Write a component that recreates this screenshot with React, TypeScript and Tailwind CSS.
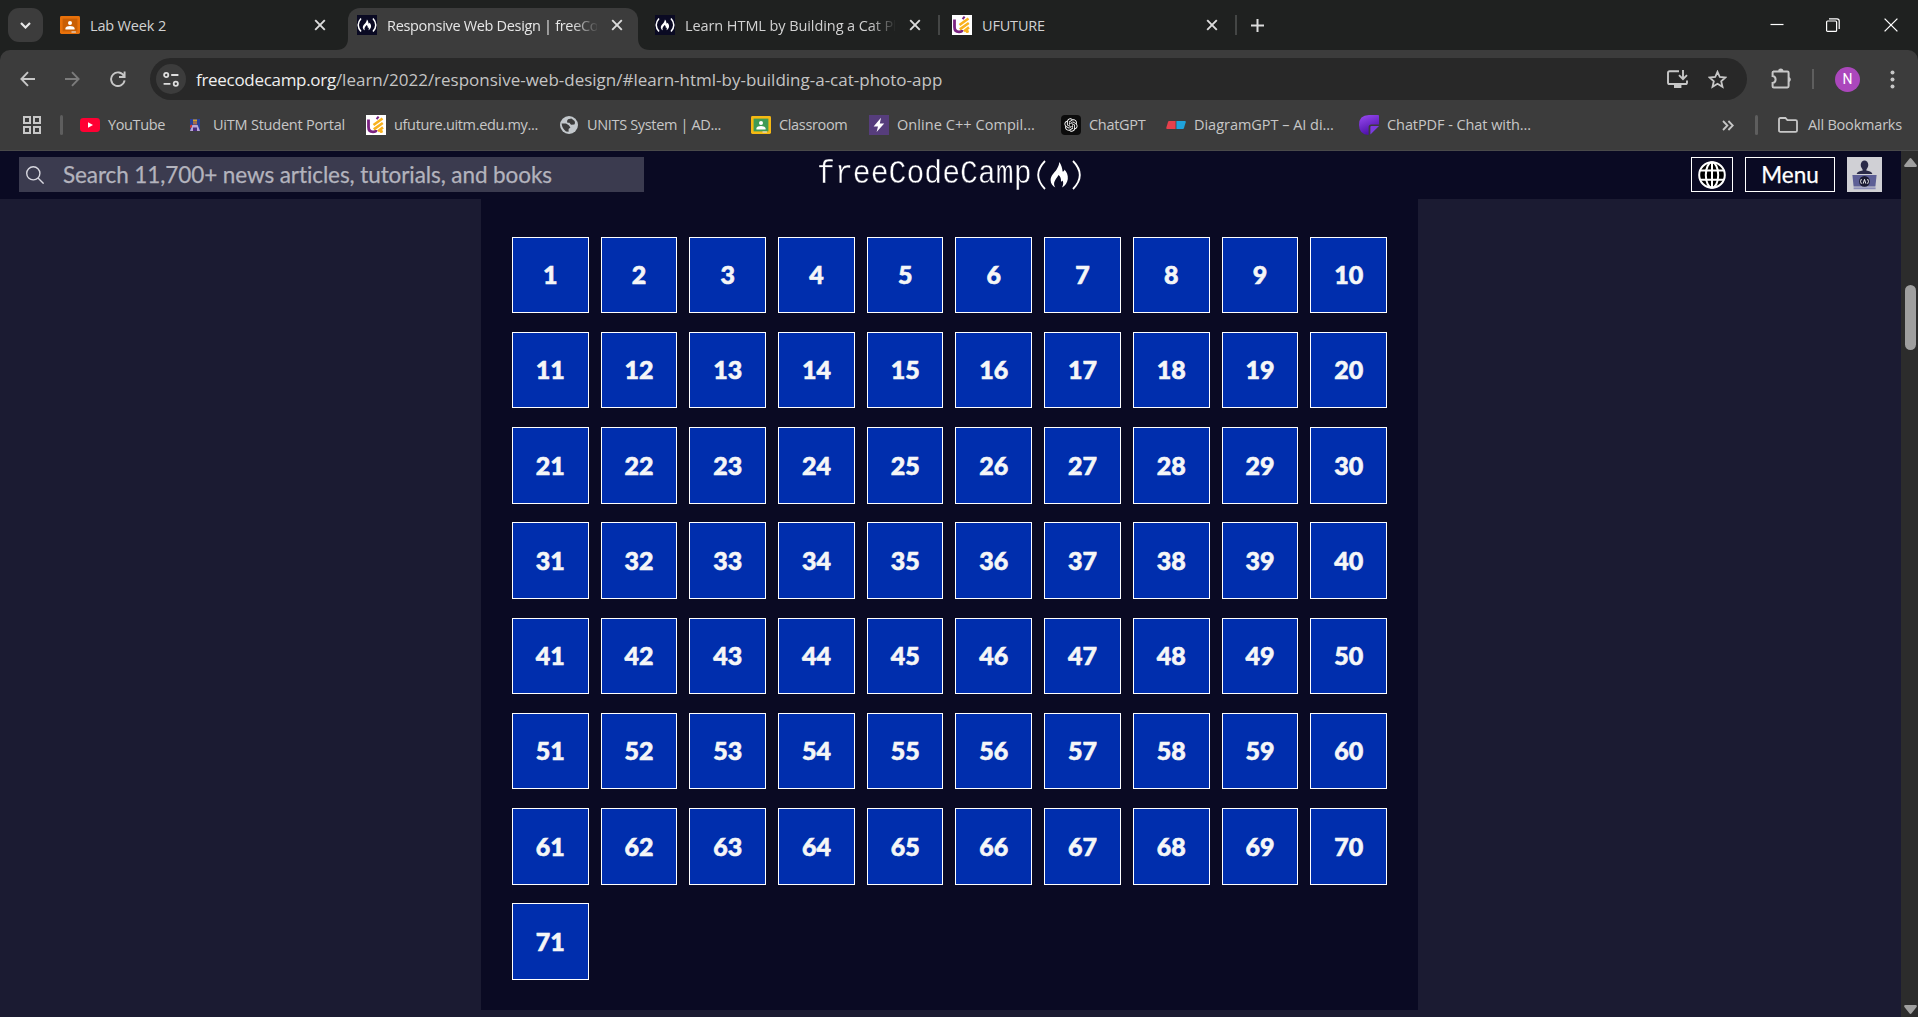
import React from "react";
import { RiOpenaiFill } from "react-icons/ri";

const FLAME =
  "M9 0C11 2.5 12.2 6 12.4 9.5C13.4 9.8 14.2 9 14.2 7.6C16.6 10 18 13.4 17.6 17C17.2 20.6 15 23.6 11.8 25.6C13.2 23 13.4 20.6 12.4 18.6C11.9 19.4 11.4 19.6 10.8 19.4C11 16.6 10.2 14.6 8.4 13C6.8 15.6 4.6 18 4 20.6C3.6 22.6 4.2 24.4 5.2 25.6C2.4 24.2 0.4 21.4 0.4 18C0.4 13.6 4.4 10.4 6.4 7.4C8 5 9 2.6 9 0Z";

function CampIcon() {
  return (
    <svg className="h-5 w-5 shrink-0" viewBox="0 0 20 20">
      <rect width="20" height="20" fill="#0a0a23" />
      <path d="M4 3.6Q-1.6 10 4 16.6M16 3.6Q21.6 10 16 16.6" fill="none" stroke="#fff" strokeWidth="1.5" />
      <path d={FLAME} fill="#fff" transform="translate(5.6 4.6) scale(0.48 0.42)" />
    </svg>
  );
}

function UfutureIcon() {
  return (
    <svg className="h-5 w-5 shrink-0" viewBox="0 0 20 20">
      <rect width="20" height="20" fill="#fff" />
      <path d="M2.5 4.5V12Q2.5 16.8 7 16.8Q10 16.8 10.4 15" fill="none" stroke="#7b2382" strokeWidth="2.8" />
      <path d="M10.6 4.2L12.6 1.6" stroke="#7b2382" strokeWidth="2" />
      <path d="M7.5 10L16.5 3.5M7.8 14.4L16.8 8M12 16.2L17 12.4" stroke="#f9b21d" strokeWidth="2.6" />
      <circle cx="15.2" cy="16.4" r="1.7" fill="#f9b21d" />
    </svg>
  );
}

function ClassIcon({ border, board }: { border: string; board: string }) {
  return (
    <svg className="h-5 w-5 shrink-0" viewBox="0 0 20 20">
      <rect y="1" width="20" height="18" rx="1.4" fill={border} />
      <rect x="2.6" y="3.6" width="14.8" height="12.8" fill={board} />
      <circle cx="10" cy="7.9" r="2" fill="#fff" />
      <path d="M5.4 14.6V13Q6.2 11.2 10 11Q13.8 11.2 14.6 13V14.6Z" fill="#fff" />
      <rect x="11.5" y="16.4" width="4.4" height="1.2" fill="#ddd" />
    </svg>
  );
}

function Cross() {
  return (
    <svg className="h-3 w-3 shrink-0" viewBox="0 0 12 12" stroke="#dcdcdc" strokeWidth="1.9">
      <path d="M1.2 1.2L10.8 10.8M10.8 1.2L1.2 10.8" />
    </svg>
  );
}

function TabStrip() {
  return (
    <div className="flex h-[50px] bg-[#1f2120] text-[14.5px] text-[#d2d2d2]">
      <div className="ml-2 mt-2 flex h-[34px] w-[35px] shrink-0 items-center justify-center rounded-[11px] bg-[#3c3c3c]">
        <svg className="h-[7px] w-[11px]" viewBox="0 0 11 7" fill="none" stroke="#e8e8e8" strokeWidth="2.2">
          <path d="M1 1L5.5 5.5L10 1" />
        </svg>
      </div>
      <div className="flex h-[50px] w-[305px] shrink-0 items-center pl-[17px]">
        <ClassIcon border="#e8710a" board="#c95f05" />
        <span className="ml-[10px] w-[224px] whitespace-nowrap pt-px tracking-[-0.16px]">Lab Week 2</span>
        <Cross />
      </div>
      <div className="relative mt-2 flex h-[42px] w-[290px] shrink-0 items-center rounded-t-[12px] bg-[#3c3c3c] pb-2 pl-[9px] text-[#e6e6e6]">
        <svg className="absolute -left-3 bottom-0 h-3 w-3" viewBox="0 0 12 12" fill="#3c3c3c">
          <path d="M12 0V12H0Q12 12 12 0Z" />
        </svg>
        <svg className="absolute -right-3 bottom-0 h-3 w-3" viewBox="0 0 12 12" fill="#3c3c3c">
          <path d="M0 0V12H12Q0 12 0 0Z" />
        </svg>
        <CampIcon />
        <span className="ml-[10px] w-[210px] shrink-0 overflow-hidden whitespace-nowrap pt-px tracking-[-0.32px] [mask-image:linear-gradient(to_right,black_185px,transparent_212px)]">
          Responsive Web Design | freeCodeCamp
        </span>
        <span className="ml-[14px] flex">
          <Cross />
        </span>
      </div>
      <div className="flex h-[50px] w-[334px] shrink-0 items-center pl-[17px]">
        <CampIcon />
        <span className="ml-[10px] w-[210px] shrink-0 overflow-hidden whitespace-nowrap pt-px tracking-[-0.08px] [mask-image:linear-gradient(to_right,black_185px,transparent_212px)]">
          Learn HTML by Building a Cat Photo App
        </span>
        <span className="ml-[14px] flex">
          <Cross />
        </span>
        <span className="ml-[17px] h-5 w-[2px] bg-[#444645]" />
        <span className="ml-3 flex">
          <UfutureIcon />
        </span>
      </div>
      <div className="flex h-[50px] grow items-center pl-[10px]">
        <span className="w-[224px] whitespace-nowrap pt-px tracking-[-0.17px]">UFUTURE</span>
        <Cross />
        <span className="ml-[17px] h-5 w-[2px] bg-[#444645]" />
        <svg className="ml-[14px] h-[13px] w-[13px]" viewBox="0 0 13 13" stroke="#dcdcdc" strokeWidth="2">
          <path d="M6.5 0V13M0 6.5H13" />
        </svg>
      </div>
      <div className="mr-5 flex h-[49px] items-center text-white">
        <svg className="h-[14px] w-[14px]" viewBox="0 0 14 14" stroke="currentColor" strokeWidth="1.2">
          <path d="M0.5 6.5H13.5" />
        </svg>
        <svg className="ml-[42px] h-[14px] w-[14px]" viewBox="0 0 14 14" fill="none" stroke="currentColor" strokeWidth="1.2">
          <rect x="0.6" y="3" width="10" height="10.4" rx="1" />
          <path d="M3 0.8H11Q13.2 0.8 13.2 3V11" />
        </svg>
        <svg className="ml-11 h-[14px] w-[14px]" viewBox="0 0 14 14" stroke="currentColor" strokeWidth="1.3">
          <path d="M0.6 0.6L13.4 13.4M13.4 0.6L0.6 13.4" />
        </svg>
      </div>
    </div>
  );
}

function AddressRow() {
  return (
    <div className="flex h-[58px] items-center rounded-t-[10px] bg-[#3c3c3c] pl-5 text-[#c7c7c7]">
      <svg className="h-4 w-[15px]" viewBox="0 0 15 16" fill="none" stroke="currentColor" strokeWidth="1.9">
        <path d="M15 8H1.6M8 1.2L1.4 8L8 14.8" />
      </svg>
      <svg className="ml-[30px] h-4 w-[15px]" viewBox="0 0 15 16" fill="none" stroke="#7b7b7b" strokeWidth="1.9">
        <path d="M0 8H13.4M7 1.2L13.6 8L7 14.8" />
      </svg>
      <svg className="ml-[30px] h-4 w-4" viewBox="0 0 16 16" fill="none" stroke="currentColor" strokeWidth="1.9">
        <path d="M14 5.2A6.8 6.8 0 1 0 14.6 9.4M14.6 0.6V6H9" />
      </svg>
      <div className="ml-6 flex h-[42px] w-[1597px] shrink-0 items-center rounded-full bg-[#282828] pl-[6px]">
        <span className="flex h-[30px] w-[30px] items-center justify-center rounded-full bg-[#3c3c3c]">
          <svg className="h-[15px] w-4" viewBox="0 0 16 15" fill="none" stroke="#dedede" strokeWidth="1.8">
            <circle cx="3.2" cy="3" r="2.1" />
            <path d="M8.2 3H15.4M0.6 11.8H7.4" />
            <circle cx="12.8" cy="11.8" r="2.1" />
          </svg>
        </span>
        <span className="ml-[10px] whitespace-nowrap pt-[2px] text-[17px] text-[#c4c4c4]">
          <span className="tracking-[-0.3px] text-[#efefef]">freecodecamp.org</span>
          /learn/2022/responsive-web-design/#learn-html-by-building-a-cat-photo-app
        </span>
        <svg className="ml-auto h-[19px] w-[21px]" viewBox="0 0 21 19" fill="none" stroke="currentColor" strokeWidth="1.9">
          <path d="M12 1.2H2.6Q1 1.2 1 2.8V12.4Q1 14 2.6 14H18.4Q20 14 20 12.4V10.6M16 0V8.6M12 5.2L16 9.2L20 5.2" />
          <rect x="7" y="15" width="7.4" height="3" fill="currentColor" stroke="none" />
        </svg>
        <svg className="ml-5 mr-5 h-[19px] w-[19px]" viewBox="0 0 19 19" fill="none" stroke="currentColor" strokeWidth="1.8">
          <path d="M9.5 1.8L11.8 7L17.4 7.5L13.2 11.2L14.5 16.8L9.5 13.8L4.5 16.8L5.8 11.2L1.6 7.5L7.2 7Z" />
        </svg>
      </div>
      <svg className="-mt-[1px] ml-6 h-[21px] w-[22px]" viewBox="0 0 22 21" fill="none" stroke="currentColor" strokeWidth="2">
        <path d="M2 3.6H16.4Q17.6 3.6 17.6 4.8V18Q17.6 19.4 16.4 19.4H2.8Q1.6 19.4 1.6 18.2V15Q4.6 14.6 4.6 11.6Q4.6 8.4 1.6 8V4.6Q1.6 3.6 2.8 3.6" />
        <path d="M7.2 3A2.6 2.6 0 0 1 12.4 3ZM18 9A2.6 2.6 0 0 1 18 14Z" fill="currentColor" stroke="none" />
      </svg>
      <span className="ml-[19px] h-5 w-[2px] bg-[#5e5e5e]" />
      <span className="ml-[21px] flex h-[25px] w-[25px] items-center justify-center rounded-full bg-[#ab47bc] font-['Roboto'] text-[14px] text-white">
        N
      </span>
      <svg className="ml-[30px] h-[19px] w-[5px]" viewBox="0 0 5 19" fill="currentColor">
        <circle cx="2.5" cy="2.4" r="2" />
        <circle cx="2.5" cy="9.5" r="2" />
        <circle cx="2.5" cy="16.6" r="2" />
      </svg>
    </div>
  );
}

function StudentIcon() {
  return (
    <svg className="mx-[5px] h-3 w-[10px]" viewBox="0 0 10 12">
      <rect width="10" height="12" fill="#2a3f96" />
      <rect x="3" y="0.5" width="4" height="2" fill="#d9a520" />
      <rect x="3" y="2.5" width="4" height="3" fill="#a86a4c" />
      <path d="M0 12L2.4 6H7.6L10 12Z" fill="#b9a5d6" />
      <path d="M3 8.5H7V12H3Z" fill="#4b2b7d" />
      <path d="M0 6.5L2 5.5V8L0 9Z" fill="#d0342c" />
    </svg>
  );
}

const bookmarks = [
  {
    label: "YouTube",
    text: "tracking-[-0.37px]",
    box: "w-[105px]",
    icon: (
      <svg className="h-5 w-5" viewBox="0 0 20 20">
        <rect y="3" width="20" height="14" rx="3.4" fill="#ff0033" />
        <path d="M8 7.2L13 10L8 12.8Z" fill="#fff" />
      </svg>
    ),
  },
  { label: "UiTM Student Portal", text: "tracking-[-0.22px]", box: "w-[181px]", icon: <StudentIcon /> },
  { label: "ufuture.uitm.edu.my...", text: "tracking-[-0.34px]", box: "w-[193px]", icon: <UfutureIcon /> },
  {
    label: "UNITS System | AD...",
    text: "tracking-[-0.34px]",
    box: "w-[192px]",
    icon: (
      <svg className="h-5 w-5" viewBox="0 0 20 20">
        <circle cx="10" cy="10" r="9" fill="#c3c8cc" />
        <path
          d="M9 4.2L12.4 3.4L15.6 6Q16.6 8.4 15.4 9.4L12 9.8L10.4 7.8H8.4L8 6ZM2.6 8.6H7L9.8 10.2L11.4 12.6L9.6 14V16.8L7 16.4Q3 13.6 2.6 8.6Z"
          fill="#3c3c3c"
        />
      </svg>
    ),
  },
  {
    label: "Classroom",
    text: "tracking-[-0.34px]",
    box: "w-[118px]",
    icon: <ClassIcon border="#f5b912" board="#3f9b55" />,
  },
  {
    label: "Online C++ Compil...",
    text: "tracking-[0.06px]",
    box: "w-[192px]",
    icon: (
      <svg className="h-5 w-5" viewBox="0 0 20 20">
        <rect width="20" height="20" fill="#563d7c" />
        <path d="M12 2.8L4.6 11.4H9L7.6 17L15.2 8.4H10.8Z" fill="#fff" />
      </svg>
    ),
  },
  {
    label: "ChatGPT",
    text: "tracking-[-0.3px]",
    box: "w-[105px]",
    icon: (
      <span className="flex h-5 w-5 items-center justify-center rounded-[4px] bg-[#0c0c0c] text-[16px] text-white">
        <RiOpenaiFill />
      </span>
    ),
  },
  {
    label: "DiagramGPT – AI di...",
    text: "tracking-[-0.03px]",
    box: "w-[193px]",
    icon: (
      <svg className="h-5 w-5" viewBox="0 0 20 20">
        <path d="M3 6H9.6V14H1.2Q0 14 0.3 12.8L2 7Q2.3 6 3 6Z" fill="#e5404c" />
        <path d="M10.4 6H19Q20 6 19.7 7.2L18 13Q17.7 14 17 14H10.4Z" fill="#1fa3dc" />
      </svg>
    ),
  },
  {
    label: "ChatPDF - Chat with...",
    text: "tracking-[-0.07px]",
    box: "w-[180px]",
    icon: (
      <svg className="h-5 w-5" viewBox="0 0 20 20">
        <defs>
          <linearGradient id="pdf" x1="0" y1="0" x2="0.4" y2="1">
            <stop offset="0" stopColor="#9a4bf2" />
            <stop offset="1" stopColor="#4c10a8" />
          </linearGradient>
        </defs>
        <path d="M10 0H19Q20 0 20 1V9.4H12.2Q9.6 9.4 9.6 12V20Q0 19.4 0 10Q0 0 10 0Z" fill="url(#pdf)" />
        <path d="M11.4 12Q11.4 11 12.4 11H20L11.4 19.6Z" fill="#7c3be0" />
      </svg>
    ),
  },
];

function BookmarksBar() {
  return (
    <div className="flex h-[43px] items-start border-b border-[#4a4a4a] bg-[#3c3c3c] pl-[23px] text-[14.5px] text-[#c7c7c7]">
      <div className="flex h-[34px] w-full items-center">
        <svg className="h-[18px] w-[18px] shrink-0" viewBox="0 0 18 18" fill="none" stroke="currentColor" strokeWidth="2">
          <path d="M1 1H7V7H1ZM11 1H17V7H11ZM1 11H7V17H1ZM11 11H17V17H11Z" />
        </svg>
        <span className="ml-[19px] mr-[17px] h-5 w-[3px] shrink-0 rounded-sm bg-[#5e5e5e]" />
        {bookmarks.map((b) => (
          <div key={b.label} className={"flex shrink-0 items-center " + b.box}>
            <span className="mr-2 flex w-5 shrink-0">{b.icon}</span>
            <span className={"whitespace-nowrap " + b.text}>{b.label}</span>
          </div>
        ))}
        <div className="ml-auto flex items-center pr-[16px]">
          <svg className="h-[11px] w-3" viewBox="0 0 12 11" fill="none" stroke="currentColor" strokeWidth="1.8">
            <path d="M1 1L5.4 5.5L1 10M6.4 1L10.8 5.5L6.4 10" />
          </svg>
          <span className="ml-[21px] h-5 w-[3px] rounded-sm bg-[#5e5e5e]" />
          <svg className="ml-[20px] h-4 w-5" viewBox="0 0 20 16" fill="none" stroke="currentColor" strokeWidth="1.8">
            <path d="M1 2.4Q1 1 2.4 1H7.4L9.4 3.2H17.6Q19 3.2 19 4.6V13.4Q19 14.8 17.6 14.8H2.4Q1 14.8 1 13.4Z" />
          </svg>
          <span className="ml-[10px] whitespace-nowrap tracking-[-0.2px]">All Bookmarks</span>
        </div>
      </div>
    </div>
  );
}

function SiteNav() {
  return (
    <div className="flex h-12 shrink-0 items-start bg-[#0a0a23] pl-[19px] pt-[6px] font-['Lato'] text-[22.5px]">
      <div className="flex h-[35px] w-[625px] items-center bg-[#3b3b4f] pl-[7px] text-[#b3b3bd]">
        <svg className="h-[18px] w-[18px]" viewBox="0 0 18 18" fill="none" stroke="#d8d8e0" strokeWidth="1.4">
          <circle cx="7.3" cy="7.3" r="6.6" />
          <path d="M12 12L17.6 17.6" />
        </svg>
        <span className="ml-[19px] whitespace-nowrap tracking-[-0.09px] [-webkit-text-stroke:0.25px_#b3b3bd]">
          Search 11,700+ news articles, tutorials, and books
        </span>
      </div>
      <div className="ml-[173px] flex h-[35px] w-[266px] items-center text-white">
        <span className="block w-[217px] origin-center scale-y-[1.13] whitespace-nowrap font-['Liberation_Mono'] text-[29.8px] leading-[35px] [-webkit-text-stroke:0.4px_#0a0a23]">
          freeCodeCamp
        </span>
        <svg className="ml-[3px] h-[30px] w-[44px] shrink-0" viewBox="0 0 44 30">
          <path d="M8 1Q-5.6 15 8 29M36 1Q49.6 15 36 29" fill="none" stroke="#fff" strokeWidth="1.8" />
          <path d={FLAME} fill="#fff" transform="translate(13.2 2)" />
        </svg>
      </div>
      <div className="ml-auto mr-[19px] flex h-[35px]">
        <span className="flex w-[42px] items-center justify-center border border-white">
          <svg className="h-7 w-7" viewBox="0 0 28 28" fill="none" stroke="#fff" strokeWidth="2">
            <circle cx="14" cy="14" r="12.8" fill="#000" />
            <ellipse cx="14" cy="14" rx="6.2" ry="12.8" />
            <path d="M14 1.2V26.8M2.4 9.4H25.6M2.4 18.8H25.6" />
          </svg>
        </span>
        <span className="ml-3 flex w-[90px] items-center justify-center border border-white text-white [-webkit-text-stroke:0.25px_white]">
          Menu
        </span>
        <svg className="ml-3 h-[35px] w-[35px]" viewBox="0 0 35 35">
          <rect width="35" height="35" fill="#d0d0d5" />
          <ellipse cx="17.5" cy="8" rx="3.8" ry="4.6" fill="#2a2a48" />
          <path d="M15.5 12H19.5V14H15.5ZM9.6 17Q10.4 13.8 17.5 13.6Q24.6 13.8 25.4 17Z" fill="#2a2a48" />
          <path d="M5.4 18H29.6L28.4 29.6H6.6Z" fill="#5d5f96" />
          <rect x="6.6" y="30.4" width="22" height="1.8" fill="#8c8eb8" />
          <circle cx="17.5" cy="24.4" r="5.4" fill="#1b1b32" />
          <path d="M14.4 22Q12.6 24.4 14.4 26.8M20.6 22Q22.4 24.4 20.6 26.8M16.2 26.6L17.5 22.4L18.8 26.6" fill="none" stroke="#fff" strokeWidth="0.9" />
        </svg>
      </div>
    </div>
  );
}

const steps = Array.from({ length: 71 }, (_, i) => i + 1);

function Steps() {
  return (
    <div className="ml-[481px] h-[811px] w-[937px] shrink-0 bg-[#0a0a23] px-[31px] pt-[37.6px]">
      <div className="grid grid-cols-10 gap-x-3 gap-y-[18.6px] font-['Lato'] text-[25px] font-black text-[#f5f6f7] [-webkit-text-stroke:0.6px_#f5f6f7]">
        {steps.map((n) => (
          <div key={n} className="flex h-[76.65px] items-center justify-center border border-white bg-[#002ead]">
            {n}
          </div>
        ))}
      </div>
    </div>
  );
}

function Scrollbar() {
  return (
    <div className="flex w-[17px] shrink-0 flex-col items-center bg-[#2c2c2c] pl-[2px]">
      <svg className="mt-[7px] h-[9px] w-[13px] shrink-0" viewBox="0 0 13 9" fill="#9f9f9f">
        <path d="M5.4 0.8Q6.5 -0.6 7.6 0.8L12.6 7Q13.4 9 11.6 9H1.4Q-0.4 9 0.4 7Z" />
      </svg>
      <div className="mt-[118px] h-[65px] w-[11px] shrink-0 rounded-full bg-[#9f9f9f]" />
      <svg className="mb-[3px] mt-auto h-[9px] w-[13px] shrink-0" viewBox="0 0 13 9" fill="#9f9f9f">
        <path d="M5.4 8.2Q6.5 9.6 7.6 8.2L12.6 2Q13.4 0 11.6 0H1.4Q-0.4 0 0.4 2Z" />
      </svg>
    </div>
  );
}

export default function App() {
  return (
    <div className="flex h-[1017px] w-[1918px] flex-col overflow-hidden bg-[#1f2120] font-['Open_Sans',sans-serif]">
      <TabStrip />
      <AddressRow />
      <BookmarksBar />
      <div className="flex min-h-0 grow">
        <div className="flex grow flex-col bg-[#1b1b32]">
          <SiteNav />
          <Steps />
        </div>
        <Scrollbar />
      </div>
    </div>
  );
}
